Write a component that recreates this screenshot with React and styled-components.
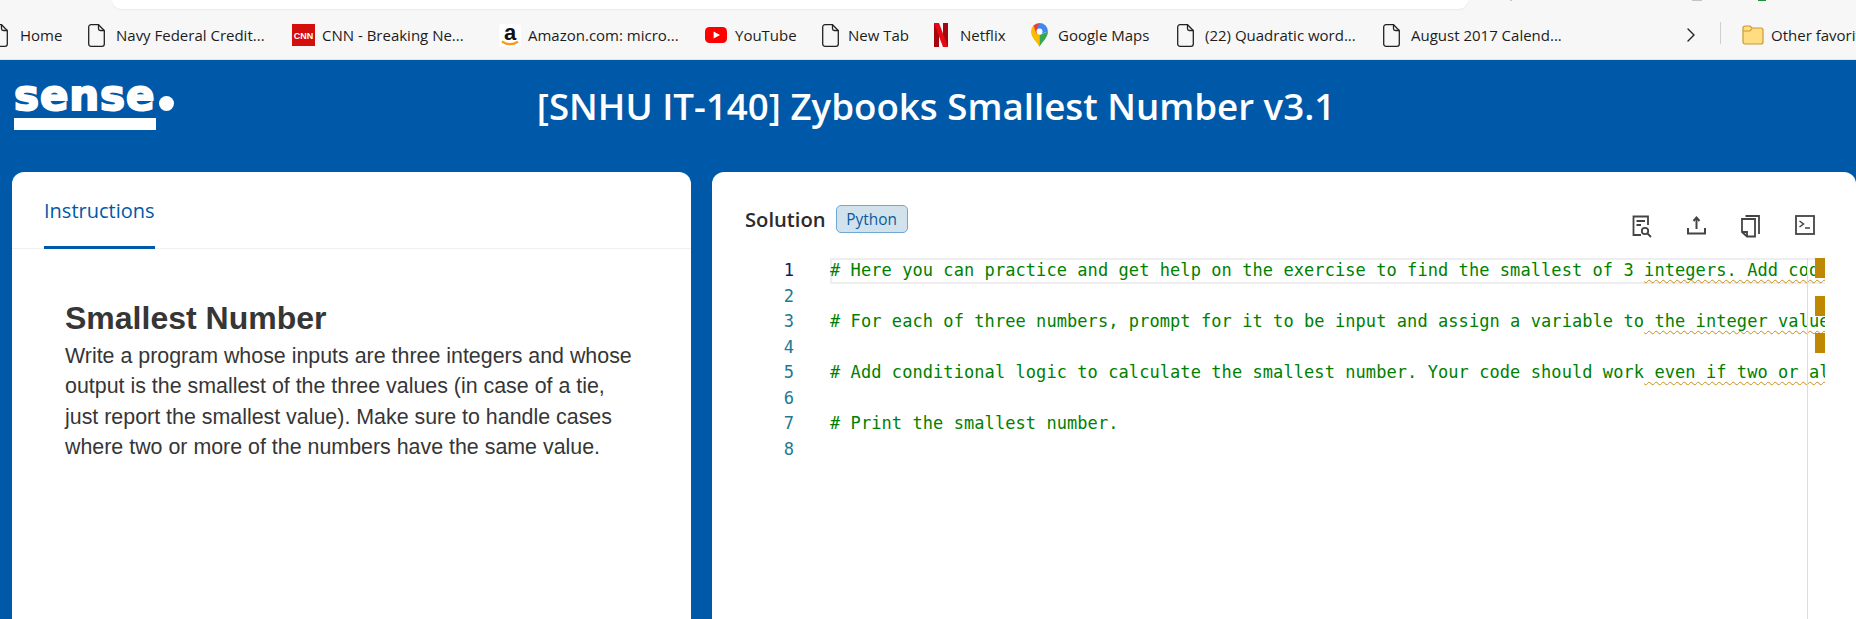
import React from 'react';
import styled, { createGlobalStyle } from 'styled-components';
import { FiChevronRight } from 'react-icons/fi';

const Global = createGlobalStyle`
  html, body { margin: 0; padding: 0; height: 619px; overflow: hidden; background: #0059a8; }
  * { box-sizing: border-box; }
`;

const Page = styled.div`
  width: 1856px;
  height: 619px;
  display: flex;
  flex-direction: column;
  overflow: hidden;
`;

const Chrome = styled.div`
  height: 60px;
  flex: none;
  background: #f7f7f7;
  border-bottom: 1px solid #dfe3e6;
  position: relative;
  overflow: hidden;
`;

const UrlBar = styled.div`
  height: 9px;
  margin: 0 388px 0 112px;
  background: #fff;
  border-radius: 0 0 14px 14px;
  box-shadow: 0 1px 2px rgba(0, 0, 0, 0.06);
`;

const TrayDot = styled.span`
  position: absolute;
  top: 0;
  left: ${(p) => p.$x}px;
  width: ${(p) => p.$w}px;
  height: 1px;
  background: ${(p) => p.$color};
`;

const Bookmarks = styled.div`
  display: flex;
  align-items: center;
  height: 37px;
  margin-left: -9px;
  padding-top: 15px;
  font-family: "Open Sans", sans-serif;
  font-size: 15px;
  color: #1c1c1c;
  white-space: nowrap;
  > svg { flex: none; margin-left: -2px; }
`;

const Bookmark = styled.div`
  display: flex;
  align-items: center;
  gap: ${(p) => p.$gap ?? 11}px;
  width: ${(p) => p.$w}px;
  flex: none;
  svg { flex: none; }
`;

const Divider = styled.span`
  width: 1px;
  height: 22px;
  background: #cfcfcf;
  flex: none;
  margin: -4px 21px 0 17px;
`;

const Header = styled.header`
  height: 112px;
  flex: none;
  position: relative;
  display: flex;
  justify-content: center;
  padding: 21px 0 0 16px;
  background: #0059a8;
`;

const Logo = styled.div`
  position: absolute;
  left: 14px;
  top: 9px;
  width: 162px;
  color: #fff;
`;

const LogoWord = styled.div`
  display: flex;
  align-items: flex-end;
  height: 43px;
  font-family: "DejaVu Sans", sans-serif;
  font-weight: 700;
  font-size: 42px;
  line-height: 33px;
  letter-spacing: 0.9px;
  -webkit-text-stroke: 2px #fff;
`;

const LogoDot = styled.span`
  width: 15px;
  height: 15px;
  border-radius: 50%;
  background: #fff;
  margin: 0 0 1px 4px;
  flex: none;
`;

const LogoBar = styled.div`
  width: 142px;
  height: 12px;
  margin-top: 6px;
  background: #fff;
`;

const Title = styled.h1`
  margin: 0;
  font-family: "Open Sans", sans-serif;
  font-weight: 600;
  font-size: 36.7px;
  line-height: 50px;
  color: #fff;
`;

const Panels = styled.main`
  flex: 1;
  display: flex;
  gap: 21px;
  padding-left: 12px;
  background: #0059a8;
`;

const Card = styled.section`
  background: #fff;
  border-radius: 12px 12px 0 0;
  height: 100%;
`;

const LeftCard = styled(Card)`
  width: 679px;
  flex: none;
`;

const RightCard = styled(Card)`
  flex: 1;
  padding-top: 33px;
`;

const Tabs = styled.div`
  height: 77px;
  padding-left: 32px;
  border-bottom: 1px solid #eef0f2;
  display: flex;
`;

const Tab = styled.div`
  height: 77px;
  padding-top: 24px;
  border-bottom: 3px solid #0059a8;
  font-family: "Open Sans", sans-serif;
  font-size: 20px;
  line-height: 30px;
  color: #0059a8;
`;

const Instructions = styled.div`
  padding: 48px 56px 0 53px;
  font-family: "Liberation Sans", Arial, sans-serif;
  color: #363636;
`;

const Heading = styled.h2`
  margin: 0 0 2px;
  font-size: 32px;
  line-height: 42px;
  font-weight: 700;
`;

const Body = styled.p`
  margin: 0;
  font-size: 21.4px;
  line-height: 30.4px;
`;

const SolutionBar = styled.div`
  height: 53px;
  padding-left: 33px;
  display: flex;
  align-items: flex-start;
`;

const SolutionTitle = styled.div`
  font-family: "Open Sans", sans-serif;
  font-weight: 600;
  font-size: 20.2px;
  line-height: 28px;
  color: #2b2b2b;
`;

const Badge = styled.span`
  margin-left: 10px;
  width: 72px;
  height: 28px;
  display: flex;
  align-items: center;
  justify-content: center;
  font-family: "Open Sans", sans-serif;
  font-size: 15.4px;
  color: #0b5a9c;
  background: #d2e2ec;
  border: 1px solid #6ea8d6;
  border-radius: 5px;
`;

const Tools = styled.div`
  margin-left: auto;
  margin-right: 41px;
  margin-top: 10px;
  display: flex;
  gap: 35px;
  svg { display: block; }
`;

const Editor = styled.div`
  position: relative;
  width: 1113px;
  height: 361px;
  overflow: hidden;
  font-family: "DejaVu Sans Mono", monospace;
  font-size: 17px;
  letter-spacing: 0.07px;
`;

const Line = styled.div`
  display: flex;
  height: 25.5px;
  line-height: 25px;
  white-space: pre;
`;

const LineNo = styled.span`
  width: 82px;
  flex: none;
  text-align: right;
  letter-spacing: 0;
  color: ${(p) => (p.$active ? '#0b216f' : '#237893')};
`;

const Code = styled.span`
  flex: 1;
  margin-left: 36px;
  padding-right: 20px;
  color: #008000;
  ${(p) => p.$active && 'box-shadow: inset 0 0 0 2px #eeeeee;'}
`;

const Squiggle = styled.span`
  text-decoration: underline wavy #c48f16 1px;
  text-underline-offset: 3px;
  text-decoration-skip-ink: none;
`;

const RulerLine = styled.div`
  position: absolute;
  top: 0;
  bottom: 0;
  left: 1095px;
  width: 1px;
  background: #dcdcdc;
`;

const RulerMark = styled.div`
  position: absolute;
  left: 1103px;
  width: 10px;
  height: 20px;
  top: ${(p) => p.$top}px;
  background: #bf8803;
`;

const PageIcon = () => (
  <svg width="17" height="23" viewBox="0 0 17 23" fill="none" stroke="#222" strokeWidth="1.3">
    <path d="M3 .7h7.500L16.300 6.500V20a2.300 2.300 0 0 1-2.300 2.300H3A2.300 2.300 0 0 1 .7 20V3A2.300 2.300 0 0 1 3 .7z" />
    <path d="M10.500.7v4a1.800 1.800 0 0 0 1.800 1.800h4" />
  </svg>
);

const CnnIcon = () => (
  <svg width="23" height="22" viewBox="0 0 23 22">
    <rect width="23" height="22" fill="#d40d0d" />
    <text x="11.500" y="14.500" textAnchor="middle" fontFamily="Liberation Sans" fontWeight="700" fontSize="9" fill="#fff">CNN</text>
  </svg>
);

const AmazonIcon = () => (
  <svg width="22" height="23" viewBox="0 0 22 23">
    <rect width="22" height="23" rx="3" fill="#fff" />
    <text x="11" y="15.500" textAnchor="middle" fontFamily="Liberation Sans" fontWeight="700" fontSize="22" fill="#111">a</text>
    <path d="M3 17.500c5 3.400 11 3.400 16 .2" stroke="#f59a1b" strokeWidth="2.200" fill="none" />
  </svg>
);

const YoutubeIcon = () => (
  <svg width="22" height="16" viewBox="0 0 22 16">
    <rect width="22" height="16" rx="4.500" fill="#f00" />
    <path d="M8.600 4.400 15 8l-6.400 3.600z" fill="#fff" />
  </svg>
);

const NetflixIcon = () => (
  <svg width="14" height="24" viewBox="0 0 14 24">
    <rect width="5" height="24" fill="#a50710" />
    <rect x="9" width="5" height="24" fill="#a50710" />
    <path d="M0 0h5l9 24H9z" fill="#e50914" />
  </svg>
);

const MapsIcon = () => (
  <svg width="17" height="24" viewBox="0 0 17 24">
    <path d="M8.500 24C6.500 19.500 0 15 0 8.500a8.500 8.500 0 0 1 2.400-5.900L8.500 8.500z" fill="#fbbc04" />
    <path d="M8.500 24c1.500-4 8.500-9 8.500-15.500L8.500 12z" fill="#34a853" />
    <path d="M2.400 2.600A8.500 8.500 0 0 1 8.500 0l3 5-6 6z" fill="#ea4335" />
    <path d="M8.500 0A8.500 8.500 0 0 1 17 8.500L10 11 6 5z" fill="#4285f4" />
    <circle cx="8.500" cy="8.500" r="3" fill="#fff" />
  </svg>
);

const FolderIcon = () => (
  <svg width="22" height="20" viewBox="0 0 22 20">
    <path d="M1 3a2 2 0 0 1 2-2h5l2 2h9a2 2 0 0 1 2 2v12a2 2 0 0 1-2 2H3a2 2 0 0 1-2-2z" fill="#ffdd80" stroke="#c99a2e" strokeWidth="1.200" />
    <path d="M1 6h7l2-2.500" fill="none" stroke="#c99a2e" strokeWidth="1.200" />
  </svg>
);

const ReviewIcon = () => (
  <svg width="20" height="23" viewBox="0 0 20 23" fill="none" stroke="#444" strokeWidth="1.800">
    <path d="M9 20H1.500V1.500H16V10" />
    <path d="M4.500 6H13M4.500 10H9" />
    <circle cx="13" cy="16" r="3.200" />
    <path d="m15.500 18.500 3.500 3.500" />
  </svg>
);

const UploadIcon = () => (
  <svg width="19" height="20" viewBox="0 0 19 20" fill="none" stroke="#444" strokeWidth="2">
    <path d="M1 13v5.500h17V13" />
    <path d="M9.500 14V3" />
    <path d="M6.500 6 9.500 2.500 12.500 6" />
  </svg>
);

const CopyIcon = () => (
  <svg width="19" height="23" viewBox="0 0 19 23" fill="none" stroke="#444" strokeWidth="1.800">
    <path d="M1 4h13v17.500H6L1 17z" />
    <path d="M4.500 1H18v18" />
    <path d="M6 21v-4H1" />
  </svg>
);

const TerminalIcon = () => (
  <svg width="20" height="20" viewBox="0 0 20 20" fill="none" stroke="#444" strokeWidth="1.800">
    <rect x="1" y="1" width="18" height="18" />
    <path d="m4.500 6 4 3-4 3M10 13h5" strokeWidth="1.500" />
  </svg>
);

const bookmarks = [
  { label: 'Home', icon: <PageIcon />, gap: 12, w: 97 },
  { label: 'Navy Federal Credit...', icon: <PageIcon />, w: 204 },
  { label: 'CNN - Breaking Ne...', icon: <CnnIcon />, gap: 7, w: 207 },
  { label: 'Amazon.com: micro...', icon: <AmazonIcon />, gap: 7, w: 206 },
  { label: 'YouTube', icon: <YoutubeIcon />, gap: 8, w: 117 },
  { label: 'New Tab', icon: <PageIcon />, gap: 9, w: 112 },
  { label: 'Netflix', icon: <NetflixIcon />, gap: 12, w: 97 },
  { label: 'Google Maps', icon: <MapsIcon />, gap: 10, w: 146 },
  { label: '(22) Quadratic word...', icon: <PageIcon />, w: 206 },
  { label: 'August 2017 Calend...', icon: <PageIcon />, w: 298 },
];

// each comment splits at column 79, where the line-length squiggle starts
const lines = [
  ['# Here you can practice and get help on the exercise to find the smallest of 3 ', 'integers. Add code to read the input values here.'],
  [],
  ['# For each of three numbers, prompt for it to be input and assign a variable to', ' the integer value entered by the user here, okay.'],
  [],
  ['# Add conditional logic to calculate the smallest number. Your code should work', ' even if two or all of the numbers are the same.'],
  [],
  ['# Print the smallest number.'],
  [],
];

export default function App() {
  return (
    <Page>
      <Global />
      <Chrome>
        <UrlBar />
        <TrayDot $x={1510} $w={2} $color="#c9c9c9" />
        <TrayDot $x={1692} $w={10} $color="#c4c4c4" />
        <TrayDot $x={1758} $w={8} $color="#1f8f3a" />
        <Bookmarks>
          {bookmarks.map((b) => (
            <Bookmark key={b.label} $w={b.w} $gap={b.gap}>
              {b.icon}
              <span>{b.label}</span>
            </Bookmark>
          ))}
          <FiChevronRight size={24} strokeWidth={1.4} color="#222" />
          <Divider />
          <Bookmark $w={130} $gap={7}>
            <FolderIcon />
            <span>Other favorites</span>
          </Bookmark>
        </Bookmarks>
      </Chrome>
      <Header>
        <Logo>
          <LogoWord>
            sense
            <LogoDot />
          </LogoWord>
          <LogoBar />
        </Logo>
        <Title>[SNHU IT-140] Zybooks Smallest Number v3.1</Title>
      </Header>
      <Panels>
        <LeftCard>
          <Tabs>
            <Tab>Instructions</Tab>
          </Tabs>
          <Instructions>
            <Heading>Smallest Number</Heading>
            <Body>
              Write a program whose inputs are three integers and whose output is the smallest of the three values (in case of a tie, just report the smallest value). Make sure to handle cases where two or more of the numbers have the same value.
            </Body>
          </Instructions>
        </LeftCard>
        <RightCard>
          <SolutionBar>
            <SolutionTitle>Solution</SolutionTitle>
            <Badge>Python</Badge>
            <Tools>
              <ReviewIcon />
              <UploadIcon />
              <CopyIcon />
              <TerminalIcon />
            </Tools>
          </SolutionBar>
          <Editor>
            {lines.map(([head, rest], i) => (
              <Line key={i}>
                <LineNo $active={i === 0}>{i + 1}</LineNo>
                <Code $active={i === 0}>
                  {head}
                  {rest && <Squiggle>{rest}</Squiggle>}
                </Code>
              </Line>
            ))}
            <RulerLine />
            <RulerMark $top={0} />
            <RulerMark $top={38} />
            <RulerMark $top={75} />
          </Editor>
        </RightCard>
      </Panels>
    </Page>
  );
}
